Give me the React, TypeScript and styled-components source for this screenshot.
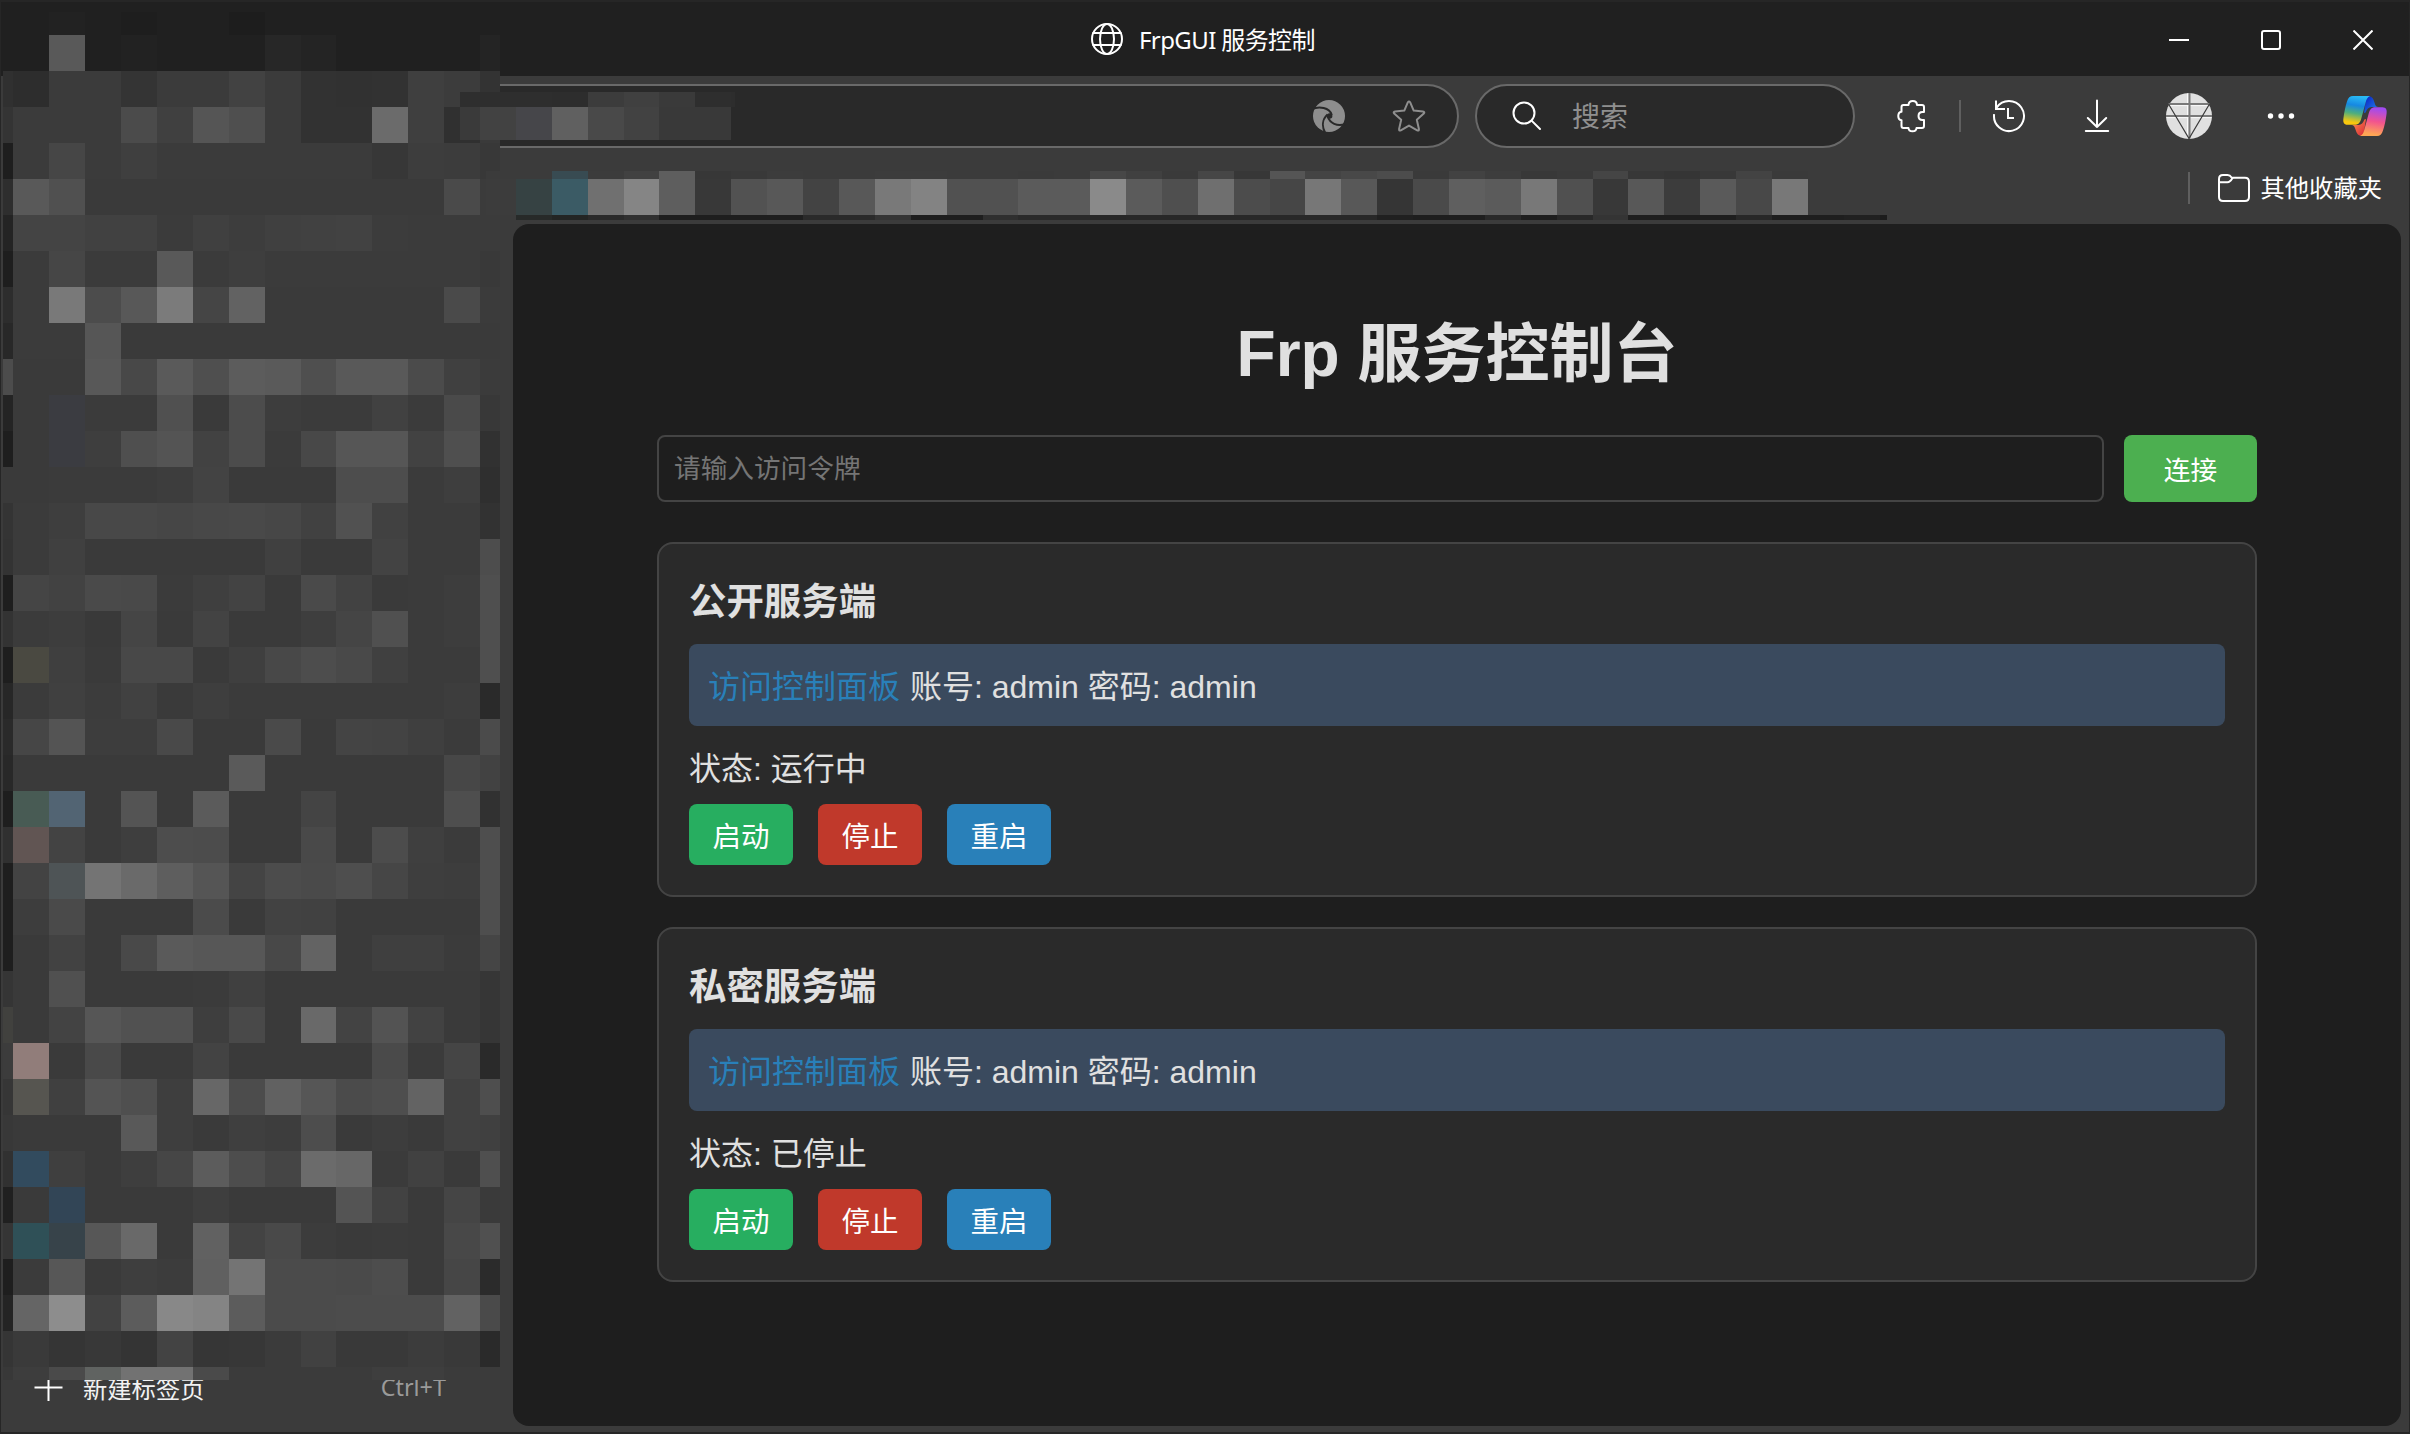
import React from 'react';
import styled, { createGlobalStyle } from 'styled-components';

const UI_FONT = '"Noto Sans", "Noto Sans CJK SC", sans-serif';
const PAGE_FONT = '"Liberation Sans", "Noto Sans CJK SC", sans-serif';

const GlobalStyle = createGlobalStyle`
  * { box-sizing: border-box; }
  html, body { margin: 0; padding: 0; background: #3b3b3b; }
  body { overflow: hidden; }
`;

const Window = styled.div`
  position: relative;
  width: 2410px;
  height: 1434px;
  display: flex;
  flex-direction: column;
  background: #3b3b3b;
  border: 1px solid #262626;
  border-top: 0;
  border-bottom-width: 2px;
  font-family: ${UI_FONT};
  color: #fff;
  overflow: hidden;
`;

const TitleBar = styled.header`
  height: 76px;
  flex: none;
  display: grid;
  grid-template-columns: 1089px auto 1fr;
  background: #202020;
  border-top: 2px solid #262626;
`;

const Caption = styled.div`
  grid-column: 2;
  display: flex;
  align-items: center;
  gap: 15px;
  font-size: 24px;
  line-height: 32px;
  letter-spacing: -0.6px;
`;

const CaptionText = styled.span`
  white-space: pre;
  padding-top: 1px;
`;

const WindowControls = styled.div`
  grid-column: 3;
  display: flex;
  justify-content: flex-end;
  align-items: center;
  padding: 2px 0 0;
`;

const ControlButton = styled.div`
  width: 92px;
  height: 64px;
  display: flex;
  align-items: center;
  justify-content: center;
`;

const Toolbar = styled.div`
  height: 80px;
  flex: none;
  display: flex;
  align-items: center;
  padding-left: 439px;
`;

const Pill = styled.div<{ $width: number }>`
  width: ${(p) => p.$width}px;
  height: 64px;
  flex: none;
  display: flex;
  align-items: center;
  border: 2px solid #696969;
  border-radius: 32px;
  background: #292929;
`;

const AddressBar = styled(Pill)`
  justify-content: flex-end;
  gap: 46px;
  padding-right: 31px;
  margin-right: 16px;
`;

const SearchBar = styled(Pill)`
  padding-left: 35px;
  gap: 30px;
  margin-right: 13px;
`;

const SearchHint = styled.span`
  font-size: 28px;
  line-height: 40px;
  color: #8f8f8f;
`;

const Slot = styled.div<{ $width: number }>`
  width: ${(p) => p.$width}px;
  flex: none;
  display: flex;
  align-items: center;
  justify-content: center;
`;

const Rule = styled.div<{ $before: number; $after: number }>`
  width: 2px;
  height: 32px;
  margin: 0 ${(p) => p.$after}px 0 ${(p) => p.$before}px;
  background: #5f5f5f;
`;

const BookmarkBar = styled.div`
  height: 68px;
  flex: none;
  display: flex;
  align-items: center;
  justify-content: flex-end;
  padding: 0 27px 4px 0;
`;

const OtherBookmarks = styled.div`
  display: flex;
  align-items: center;
  gap: 11px;
  font-size: 24.3px;
  line-height: 32px;
`;

const Workspace = styled.div`
  flex: 1;
  display: flex;
  min-height: 0;
  padding: 0 8px 6px 0;
`;

const Sidebar = styled.aside`
  width: 512px;
  flex: none;
  display: flex;
  flex-direction: column;
  justify-content: flex-end;
  padding: 0 0 17px;
`;

const NewTab = styled.div`
  display: flex;
  align-items: center;
  padding-left: 33px;
  padding-right: 67px;
  height: 44px;
  font-size: 24.3px;
`;

const NewTabLabel = styled.span`
  margin-left: 20px;
  flex: 1;
  color: #f2f2f2;
`;

const Shortcut = styled.span`
  font-size: 23.4px;
  color: #9a9a9a;
`;

const Page = styled.main`
  flex: 1;
  display: flex;
  justify-content: center;
  border-radius: 16px;
  background: #1e1e1e;
  font-family: ${PAGE_FONT};
  color: #e0e0e0;
`;

const Container = styled.div`
  width: 1600px;
  padding-top: 92px;
`;

const Heading = styled.h1`
  margin: 0 0 43px;
  font-size: 64px;
  line-height: 76px;
  font-weight: 700;
  text-align: center;
`;

const TokenRow = styled.div`
  display: flex;
  gap: 20px;
  margin-bottom: 40px;
`;

const TokenInput = styled.input`
  flex: 1;
  height: 67px;
  padding: 1px 16px 0 15px;
  border: 2px solid #444;
  border-radius: 8px;
  background: #1e1e1e;
  color: #e0e0e0;
  font-family: ${PAGE_FONT};
  font-size: 26.67px;
  &::placeholder { color: #757575; opacity: 1; }
`;

const ConnectButton = styled.button`
  width: 133px;
  height: 67px;
  padding: 0;
  border: 0;
  border-radius: 8px;
  background: #4caf50;
  color: #fff;
  font-family: ${PAGE_FONT};
  font-size: 26.67px;
`;

const Card = styled.section`
  height: 355px;
  margin-bottom: 30px;
  padding: 31px 30px 30px;
  border: 2px solid #444;
  border-radius: 16px;
  background: #2a2a2a;
`;

const CardTitle = styled.h3`
  margin: 0 0 15px;
  font-size: 37.44px;
  line-height: 54px;
  font-weight: 700;
`;

const InfoBox = styled.div`
  height: 82px;
  padding: 21px 19px;
  border-radius: 8px;
  background: #3a4a5e;
  font-size: 32px;
  line-height: 44px;
`;

const PanelLink = styled.a`
  color: #2980b9;
  text-decoration: none;
  margin-right: 1px;
`;

const Status = styled.div`
  margin: 22px 0 14px;
  font-size: 32px;
  line-height: 42px;
`;

const Actions = styled.div`
  display: flex;
  gap: 25px;
`;

const ActionButton = styled.button<{ $color: string }>`
  width: 104px;
  height: 61px;
  padding: 0;
  border: 0;
  border-radius: 8px;
  background: ${(p) => p.$color};
  color: #fff;
  font-family: ${PAGE_FONT};
  font-size: 28.5px;
`;

/* Pixelated privacy masks that float above the browser chrome. */
const Mask = styled.div<{ $x: number; $y: number; $cols: string; $rows: string }>`
  position: absolute;
  left: ${(p) => p.$x - 1}px;
  top: ${(p) => p.$y}px;
  display: grid;
  grid-template-columns: ${(p) => p.$cols};
  grid-template-rows: ${(p) => p.$rows};
`;

const Pixel = styled.i<{ $tone: string }>`
  background: ${(p) => p.$tone};
`;

const SIDE = [
  '20 20 22 20 1e 20 20 1d 20 20 20 20 20 20 20',
  '20 20 59 20 22 20 20 20 27 24 20 20 20 20 24',
  '30 2d 3b 3b 34 3b 3b 42 3b 32 31 32 3f 3c 33',
  '34 3b 3b 3b 4b 40 55 4f 3b 32 32 6b 3f 30 3a',
  '1e 3b 46 3b 3f 3b 3b 3b 3b 3b 3b 37 3d 3c 38',
  '2e 59 50 3a 3a 3a 3a 3a 3a 3a 3a 3a 3a 4a 3b',
  '24 44 44 41 41 3b 40 3d 40 41 42 3c 3b 3b 3b',
  '1e 3b 46 3b 3b 59 3b 3e 3b 3b 3b 3b 3b 3b 39',
  '2d 3b 79 4c 58 7b 45 62 3a 3a 3a 3a 3a 4a 3b',
  '28 3b 3b 56 3a 3a 3a 3a 3a 3a 3a 3a 3a 3a 3a',
  '4c 3a 3a 58 48 5a 4f 5c 5a 4f 59 59 4b 40 3b',
  '24 3a 3b3c41 3b 3b 50 3a 4c 3d 3b 3b 41 3b 4a 38',
  '1e 3a 3b3c41 3e 4f 54 42 4c 3b 48 56 56 42 4f 31',
  '3a 3a 3b 3b 3b 3d 43 3a 3a 3a 4d 4d 3b 3e 2f',
  '34 3b 3e 48 48 46 48 49 47 41 51 41 3b 3b 32',
  '33 3b 40 3a 3a 3a 3a 3a 40 3a 3a 43 3b 3b 4d',
  '1e 45 42 4a 49 3b 3f 43 3a 4a 42 3a 3b 3d 4f',
  '33 3b 3d 39 45 3a 43 3a 3a 3e 45 50 3b 3d 4f',
  '1e 4a4941 3f 3a 48 48 3a 3f 48 4d 49 40 3b 3b 4f',
  '27 3b 40 3c 41 3a 3e 3b 3b 3b 3b 3b 3b 3d 2a',
  '2a 46 54 3d 3d 49 3a 3a 4a 3a 44 43 3f 3b 4b',
  '28 3a 3a 3a 3a 3a 3a 5a 3a 3a 3a 3a 3a 47 42',
  '1e 485b54 526473 3a 54 3a 5b 3a 3a 44 3a 3a 3a 4e 31',
  '30 615553 43 3a 3e 4d 4c 3a 3a 49 3a 4c 3f 3b 4e',
  '1e 43 4e5456 74 6a 5e 55 44 4c 4a 4e 46 3e 3d 4e',
  '1e 3d 4a 3a 3a 3a 4b 3a 42 41 3a 3a 3a 3a 4e',
  '1e 3a 42 3a 49 5a 57 57 48 63 3a 3f 3f 3b 45',
  '35 3a 50 3a 3a 3a 3b 40 3a 3a 3a 3a 3a 3a 36',
  '41413e 3a 43 56 51 51 3e 49 3a 69 43 53 42 3a 36',
  '3c 917d7a 3a 49 3a 3a 43 3a 3a 3a 3a 4a 3b 45 2a',
  '36 565550 40 54 4f 3e 67 4c 61 56 4b 4e 63 41 4e',
  '38 3a 3a 3a 59 3e 3a 3f 3d 4d 3a 3d 3a 41 40',
  '31 324b5e 3f 3a 3e 46 5c 4d 45 6b 67 3b 41 3a 4f',
  '20 3a 324556 3a 3a 3a 3e 3a 3a 3a 54 42 3a 45 3a',
  '35 2f5057 37434a 57 69 3a 61 43 49 3c 3a 3b 3a 48 50',
  '1e 3b 57 3a 3e 3c 60 74 4b 4b 4a 4d 3a 46 2b',
  '24 65 8d 42 5c 88 84 5c 4b 4b 4c 4c 4c 62 4a',
  '35 3a 35 38 34 43 36 37 3b 41 39 39 3c 39 2a',
  '38 3d 4a 606361 72 72 4a 3b 3b 3b 3b 3e 3e 3b 3b',
];

const ADDRESS = ['2e 2e 2e 2d 3c 40 3a 2e 2d', '3a 42 46464a 60 49 42 39 39 29'];

const BOOKMARKS = [
  '3b 3b 384b52 3c 41 5e 37 39 3c 3b 3b 3c 3c 3b 3b 3a 3b 47 40 3a 46 37 55 44 48 4c 3a 42 3d 38 3a 45 37 35 38 43 3a 3b 3b 3b',
  '3c 364243 3b5b65 70 85 5e 38 52 58 43 58 79 83 51 51 5b 5b 8a 5b 4f 6f 4c 46 77 58 35 4a 5f 5b 78 50 38 58 3c 5a 48 78 3b 3b 3b',
  '3b 272a29 232524 2a 30 1e 1e 1e 1e 2a 2a 34 1e 1e 2f 2a 2a 27 28 28 28 28 28 28 28 20 1e 1e 29 1e 28 34 1e 1e 1e 28 1e 1e 20 1c',
];

const tone = (t: string) => (t.length === 2 ? `#${t}${t}${t}` : `#${t}`);

type MosaicProps = { x: number; y: number; cols: string; rows: string; data: string[] };
const Mosaic = ({ x, y, cols, rows, data }: MosaicProps) => (
  <Mask $x={x} $y={y} $cols={cols} $rows={rows}>
    {data.flatMap((row, r) => row.split(' ').map((t, c) => <Pixel key={`${r}-${c}`} $tone={tone(t)} />))}
  </Mask>
);

const line = {
  fill: 'none',
  stroke: '#fff',
  strokeWidth: 2,
  strokeLinecap: 'round' as const,
  strokeLinejoin: 'round' as const,
};

const GlobeIcon = () => (
  <svg width="34" height="34" viewBox="0 0 34 34" {...line}>
    <circle cx="17" cy="17" r="15" />
    <ellipse cx="17" cy="17" rx="7" ry="15" />
    <path d="M3.2 11H30.8M3.2 23H30.8" />
  </svg>
);

const SwirlIcon = () => (
  <svg width="34" height="34" viewBox="0 0 34 34" fill="none" stroke="#292929" strokeWidth="2">
    <circle cx="17" cy="17" r="16" fill="#8e8e8e" stroke="none" />
    <path d="M0 10.2C7 7 17.5 8.5 19.8 16" />
    <path d="M13.2 34C9.5 27 10.5 20 15.5 15.5" />
    <path d="M33 25.2C25 27.5 18 24.5 15.6 17.5" />
    <circle cx="17.6" cy="17" r="2.8" fill="#292929" stroke="none" />
  </svg>
);

const StarIcon = () => (
  <svg width="34" height="34" viewBox="0 0 34 34" {...line} stroke="#8e8e8e">
    <path d="M15.9 3.2Q17 1.6 18.1 3.2L21.7 11.6L31 12.6Q33.2 13 31.8 14.6L24.8 20.8L26.9 30Q27.2 32.2 25.2 31.4L17 26.6L8.8 31.4Q6.8 32.2 7.1 30L9.2 20.8L2.2 14.6Q.8 13 3 12.6L12.3 11.6Z" />
  </svg>
);

const SearchIcon = () => (
  <svg width="30" height="30" viewBox="0 0 30 30" {...line}>
    <circle cx="12" cy="12" r="10.5" />
    <path d="M19.6 19.6L28 28" />
  </svg>
);

const PuzzleIcon = () => (
  <svg width="32" height="36" viewBox="0 0 32 36" {...line}>
    <path d="M7.5 7H12.5C12.8 1.8 20.8 1.8 21 7H26Q28 7 28 9V14H26.5C21.2 14 21.2 22 26.5 22H28V28Q28 30 26 30H20.5C20.3 34.3 12.7 34.3 12.5 30H7.5Q5.5 30 5.5 28V22.3C1.2 21.7 1.2 14.3 5.5 13.7V9Q5.5 7 7.5 7Z" />
  </svg>
);

const HistoryIcon = () => (
  <svg width="34" height="34" viewBox="0 0 34 34" {...line} strokeLinecap="butt" strokeLinejoin="miter">
    <path d="M2.1 15.2A15 15 0 1 0 4.6 8.6" />
    <path d="M4 1.5V10H13M16 9V19H22" />
  </svg>
);

const DownloadIcon = () => (
  <svg width="26" height="34" viewBox="0 0 26 34" {...line}>
    <path d="M13 1.5V28M3.8 19L13 28L22.2 19M1.8 32H24.2" />
  </svg>
);

const AvatarIcon = () => (
  <svg width="48" height="48" viewBox="0 0 48 48" fill="none">
    <circle cx="24" cy="24" r="23" fill="#e0e0e0" />
    <path d="M22.5 1.5V46M4 13.6H44M1.5 25.6H46.5" stroke="#fafafa" />
    <path d="M24.5 1V46.5M3.5 12H44.5M1 24H47" stroke="#7a7a7a" strokeWidth="2" />
    <path d="M3.5 12L24 46.5L44.5 12" stroke="#3b3b3b" strokeWidth="1.2" />
  </svg>
);

const MoreIcon = () => (
  <svg width="28" height="8" viewBox="0 0 28 8" fill="#fff">
    <circle cx="3.5" cy="4" r="2.7" />
    <circle cx="14" cy="4" r="2.7" />
    <circle cx="24.5" cy="4" r="2.7" />
  </svg>
);

const LEAF = 'M11 1H28C25.5 2 24.5 4 23.5 8L19.3 23.5C18 28.3 16 29.8 12.5 29.8H5.5C1.8 29.8.9 27 1.4 23.5C2 18 3.5 11 5 6.5C6.2 2.8 8 1 11 1Z';
const FOLD = 'M25.5 1C30 1 31.3 3.5 32.4 7.2C33.3 10.5 34.2 12 36.5 12H29.5C26.5 12.2 24.8 14 23.6 17.5L22 18L23.5 8C24 5 24.5 2 25.5 1Z';

const CopilotIcon = () => (
  <svg width="46" height="42" viewBox="0 0 46 42">
    <defs>
      <linearGradient id="cool" x1="0.5" y1="0" x2="0.35" y2="1">
        <stop offset="0" stopColor="#29baf5" />
        <stop offset="0.32" stopColor="#1688e2" />
        <stop offset="0.6" stopColor="#4fae7d" />
        <stop offset="0.92" stopColor="#f9c80e" />
      </linearGradient>
      <linearGradient id="coolFold" x1="0" y1="0" x2="1" y2="1">
        <stop offset="0.2" stopColor="#1031c8" />
        <stop offset="1" stopColor="#1f8df0" />
      </linearGradient>
      <linearGradient id="warm" x1="0.5" y1="0" x2="0.35" y2="1">
        <stop offset="0.05" stopColor="#ffa654" />
        <stop offset="0.5" stopColor="#f2548e" />
        <stop offset="0.95" stopColor="#a24bef" />
      </linearGradient>
      <linearGradient id="warmFold" x1="0" y1="0" x2="1" y2="1">
        <stop offset="0.2" stopColor="#e0383c" />
        <stop offset="1" stopColor="#ff9a4c" />
      </linearGradient>
    </defs>
    <path d={FOLD} fill="url(#coolFold)" />
    <path d={FOLD} fill="url(#warmFold)" transform="rotate(180 23 21)" />
    <path d={LEAF} fill="url(#cool)" />
    <path d={LEAF} fill="url(#warm)" transform="rotate(180 23 21)" />
  </svg>
);

const FolderIcon = () => (
  <svg width="32" height="28" viewBox="0 0 32 28" {...line}>
    <path d="M1 5Q1 1 5 1H9.5Q12 1 13.8 3.8H27Q31 3.8 31 8V23Q31 27 27 27H5Q1 27 1 23Z" />
    <path d="M1 8.3H9.5Q12 8.3 14.5 4" />
  </svg>
);

const PlusIcon = () => (
  <svg width="29" height="29" viewBox="0 0 29 29" {...line} strokeLinecap="butt">
    <path d="M14.5 1V28M.5 14.5H28.5" />
  </svg>
);

const Service = ({ name, status }: { name: string; status: string }) => (
  <Card>
    <CardTitle>{name}</CardTitle>
    <InfoBox>
      <PanelLink>访问控制面板</PanelLink> 账号: admin 密码: admin
    </InfoBox>
    <Status>状态: {status}</Status>
    <Actions>
      <ActionButton $color="#27ae60">启动</ActionButton>
      <ActionButton $color="#c0392b">停止</ActionButton>
      <ActionButton $color="#2980b9">重启</ActionButton>
    </Actions>
  </Card>
);

export default function App() {
  return (
    <>
      <GlobalStyle />
      <Window>
        <TitleBar>
          <Caption>
            <GlobeIcon />
            <CaptionText>FrpGUI 服务控制</CaptionText>
          </Caption>
          <WindowControls>
            <ControlButton>
              <svg width="20" height="20" viewBox="0 0 20 20"><path d="M0 10H20" stroke="#fff" strokeWidth="2" /></svg>
            </ControlButton>
            <ControlButton>
              <svg width="20" height="20" viewBox="0 0 20 20" {...line}><rect x="1" y="1" width="18" height="18" rx="2" /></svg>
            </ControlButton>
            <ControlButton>
              <svg width="20" height="20" viewBox="0 0 20 20" {...line} strokeLinecap="butt"><path d="M.5 .5L19.5 19.5M19.5 .5L.5 19.5" /></svg>
            </ControlButton>
          </WindowControls>
        </TitleBar>

        <Toolbar>
          <AddressBar $width={1019}>
            <SwirlIcon />
            <StarIcon />
          </AddressBar>
          <SearchBar $width={380}>
            <SearchIcon />
            <SearchHint>搜索</SearchHint>
          </SearchBar>
          <Slot $width={88}><PuzzleIcon /></Slot>
          <Rule $before={3} $after={4} />
          <Slot $width={88}><HistoryIcon /></Slot>
          <Slot $width={88}><DownloadIcon /></Slot>
          <Slot $width={96}><AvatarIcon /></Slot>
          <Slot $width={88}><MoreIcon /></Slot>
          <Slot $width={80}><CopilotIcon /></Slot>
        </Toolbar>

        <BookmarkBar>
          <Rule $before={0} $after={28} />
          <OtherBookmarks>
            <FolderIcon />
            <span>其他收藏夹</span>
          </OtherBookmarks>
        </BookmarkBar>

        <Workspace>
          <Sidebar>
            <NewTab>
              <PlusIcon />
              <NewTabLabel>新建标签页</NewTabLabel>
              <Shortcut>Ctrl+T</Shortcut>
            </NewTab>
          </Sidebar>
          <Page>
            <Container>
              <Heading>Frp 服务控制台</Heading>
              <TokenRow>
                <TokenInput placeholder="请输入访问令牌" />
                <ConnectButton>连接</ConnectButton>
              </TokenRow>
              <Service name="公开服务端" status="运行中" />
              <Service name="私密服务端" status="已停止" />
            </Container>
          </Page>
        </Workspace>

        <Mosaic x={3} y={12} cols="10px repeat(8, 36px) 35px repeat(4, 36px) 20px" rows="23px repeat(37, 36px) 13px" data={SIDE} />
        <Mosaic x={460} y={92} cols="20px repeat(4, 36px) 35px 36px 36px 4px" rows="15px 33px" data={ADDRESS} />
        <Mosaic
          x={486}
          y={171}
          cols="30px repeat(3, 36px) 35px repeat(9, 36px) 35px repeat(7, 36px) 35px repeat(8, 36px) 35px repeat(7, 36px) 7px"
          rows="8px 36px 5px"
          data={BOOKMARKS}
        />
      </Window>
    </>
  );
}
